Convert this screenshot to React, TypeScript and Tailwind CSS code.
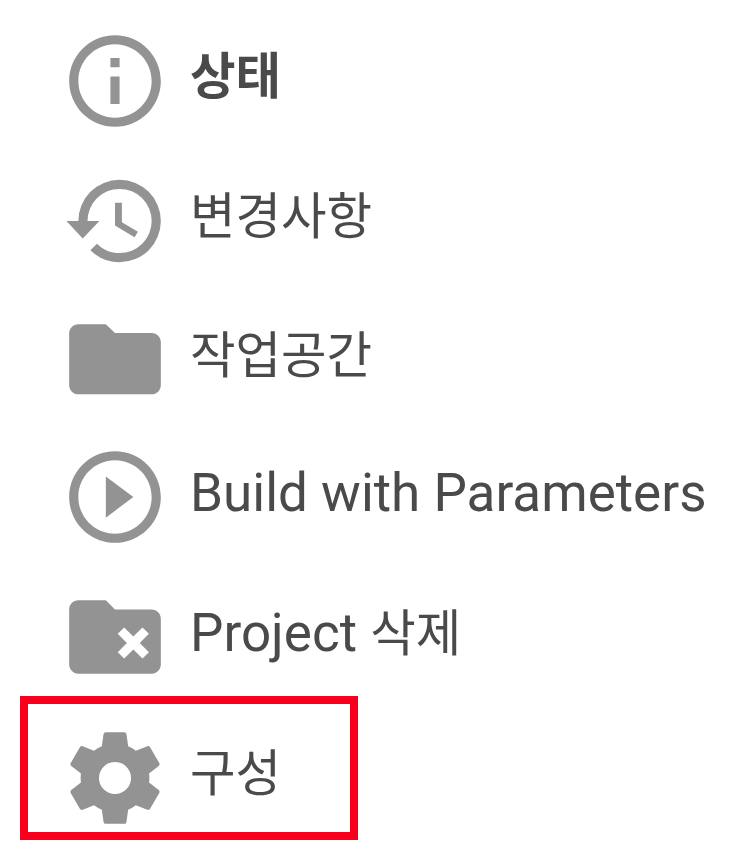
import type { ReactNode } from 'react'

interface ItemProps {
  icon: ReactNode
  children: ReactNode
  className?: string
  labelClass?: string
}

const Item = ({ icon, children, className = 'h-[140px]', labelClass = 'pb-[5px]' }: ItemProps) => (
  <li className={`flex items-center ${className}`}>
    <svg viewBox="0 0 24 24" className="h-[110px] w-[110px] shrink-0 fill-[#939393]">
      {icon}
    </svg>
    <span className={`ml-5 whitespace-nowrap ${labelClass}`}>{children}</span>
  </li>
)

const App = () => {
  return (
    <nav className="h-[854px] w-[734px] overflow-hidden bg-white pt-[11px] pl-[20px] font-[Roboto,'Noto_Sans_CJK_KR',sans-serif] text-[49.5px] leading-none text-[#4a4a4a]">
      <ul className="pl-[40px]">
        <Item
          className="h-[139px]"
          labelClass="pb-[5px] font-bold"
          icon={<path d="M11 7h2v2h-2zm0 4h2v6h-2zm1-9C6.48 2 2 6.48 2 12s4.48 10 10 10 10-4.48 10-10S17.52 2 12 2zm0 18c-4.41 0-8-3.59-8-8s3.59-8 8-8 8 3.59 8 8-3.59 8-8 8z" />}
        >
          상태
        </Item>
        <Item
          className="h-[141px]"
          labelClass="pb-[6px]"
          icon={<path d="M13.5 8H12v5l4.28 2.54.72-1.21-3.5-2.08V8M13 3a9 9 0 0 0-9 9H1.4l3.56 3.8L8.6 12H6a7 7 0 0 1 7-7 7 7 0 0 1 7 7 7 7 0 0 1-7 7c-1.93 0-3.68-.79-4.94-2.06l-1.42 1.42A8.9 8.9 0 0 0 13 21a9 9 0 0 0 9-9 9 9 0 0 0-9-9" />}
        >
          변경사항
        </Item>
        <Item
          className="h-[136px]"
          labelClass="pb-[4px]"
          icon={<path d="M10 4.4H4c-1.1 0-2 .9-2 2v11.3c0 1.1.9 2 2 2h16c1.1 0 2-.9 2-2V8.3c0-1.1-.9-2-2-2h-8l-2-1.9z" />}
        >
          작업공간
        </Item>
        <Item
          labelClass="pb-[7px] text-[53px]"
          icon={<path d="M10 16.5l6-4.5-6-4.5v9zM12 2C6.48 2 2 6.48 2 12s4.48 10 10 10 10-4.48 10-10S17.52 2 12 2zm0 18c-4.41 0-8-3.59-8-8s3.59-8 8-8 8 3.59 8 8-3.59 8-8 8z" />}
        >
          Build with Parameters
        </Item>
        <Item
          labelClass="pb-[7px] text-[53px]"
          icon={<path fillRule="evenodd" d="M10 4H4c-1.1 0-2 .9-2 2v12c0 1.1.9 2 2 2h16c1.1 0 2-.9 2-2V8c0-1.1-.9-2-2-2h-8l-2-2zM12.6 11.3l1.4-1.4 2 2 2-2 1.4 1.4-2 2 2 2-1.4 1.4-2-2-2 2-1.4-1.4 2-2z" />}
        >
          Project <span className="text-[49.5px]">삭제</span>
        </Item>
      </ul>
      <ul className="-mt-[11px] h-[144px] w-[338px] border-8 border-[#f8001d] pl-[32px]">
        <Item
          className="h-[148px]"
          labelClass="pb-[7px]"
          icon={<path d="M12 15.5A3.5 3.5 0 0 1 8.5 12 3.5 3.5 0 0 1 12 8.5a3.5 3.5 0 0 1 3.5 3.5 3.5 3.5 0 0 1-3.5 3.5m7.43-2.53c.04-.32.07-.64.07-.97s-.03-.66-.07-1l2.11-1.63c.19-.15.24-.42.12-.64l-2-3.46c-.12-.22-.39-.31-.61-.22l-2.49 1c-.52-.39-1.06-.73-1.69-.98l-.37-2.65A.506.506 0 0 0 14 2h-4c-.25 0-.46.18-.5.42l-.37 2.65c-.63.25-1.17.59-1.69.98l-2.49-1c-.22-.09-.49 0-.61.22l-2 3.46c-.13.22-.07.49.12.64L4.57 11c-.04.34-.07.67-.07 1s.03.65.07.97l-2.11 1.66c-.19.15-.25.42-.12.64l2 3.46c.12.22.39.3.61.22l2.49-1.01c.52.4 1.06.74 1.69.99l.37 2.65c.04.24.25.42.5.42h4c.25 0 .46-.18.5-.42l.37-2.65c.63-.26 1.17-.59 1.69-.99l2.49 1.01c.22.08.49 0 .61-.22l2-3.46c.12-.22.07-.49-.12-.64z" />}
        >
          구성
        </Item>
      </ul>
    </nav>
  )
}

export default App
